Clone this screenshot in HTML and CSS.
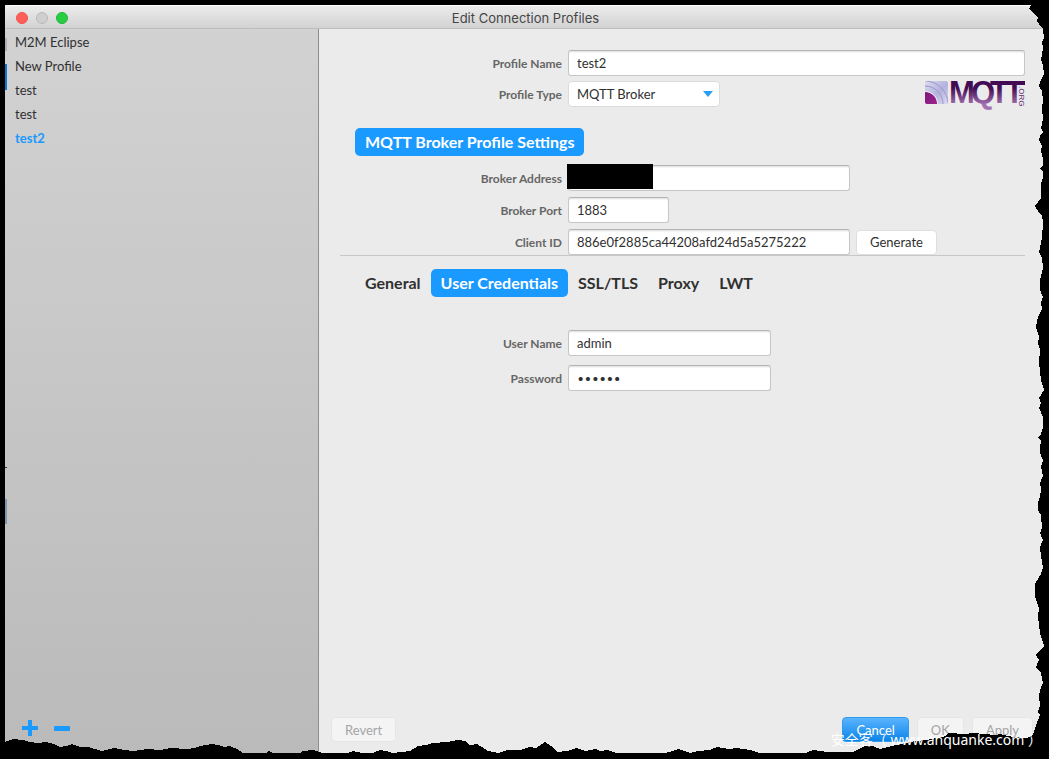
FILE: index.html
```html
<!DOCTYPE html>
<html lang="en">
<head>
  <meta charset="UTF-8" />
  <meta name="viewport" content="width=device-width, initial-scale=1.0"/>
  <title>Edit Connection Profiles</title>
  <link rel="stylesheet" href="styles.css">
</head>
<body>
  <div class="window">
    <header class="titlebar">
      <div class="lights">
        <button type="button" class="light red" aria-label="Close"></button>
        <button type="button" class="light grey" aria-label="Minimize"></button>
        <button type="button" class="light green" aria-label="Zoom"></button>
      </div>
      <h1>Edit Connection Profiles</h1>
    </header>

    <div class="content">
      <aside class="sidebar">
        <ul class="profiles">
          <li><a href="#">M2M Eclipse</a></li>
          <li><a href="#">New Profile</a></li>
          <li><a href="#">test</a></li>
          <li><a href="#">test</a></li>
          <li><a href="#" class="active">test2</a></li>
        </ul>
        <div class="sidebar-actions">
          <button type="button" aria-label="Add profile">
            <svg width="16" height="16" viewBox="0 0 16 16"><path d="M6 0h4v6h6v4h-6v6H6v-6H0V6h6z" fill="#1a99ff"/></svg>
          </button>
          <button type="button" aria-label="Remove profile">
            <svg width="16" height="16" viewBox="0 0 16 16"><rect y="6" width="16" height="5" rx="1" fill="#1a99ff"/></svg>
          </button>
        </div>
      </aside>

      <form class="panel">
        <div class="fields">
          <label for="profile-name">Profile Name</label>
          <input type="text" id="profile-name" value="test2">

          <label for="profile-type">Profile Type</label>
          <div class="type-row">
            <div class="select-wrap">
              <select id="profile-type">
                <option>MQTT Broker</option>
              </select>
              <svg class="arrow" width="10" height="6" viewBox="0 0 10 6"><path d="M0 0h10L5 6z" fill="#2a9df4"/></svg>
            </div>
            <svg class="logo" width="100" height="26" viewBox="0 0 100 26">
              <defs>
                <linearGradient id="word" x1="0" y1="0" x2="0" y2="24" gradientUnits="userSpaceOnUse">
                  <stop offset="0.3" stop-color="#430b54"/>
                  <stop offset="1" stop-color="#a673b2"/>
                </linearGradient>
                <linearGradient id="wave" x1="0" y1="0" x2="1" y2="1">
                  <stop offset="0" stop-color="#dcdcf0"/>
                  <stop offset="0.55" stop-color="#b4b1dc"/>
                  <stop offset="1" stop-color="#dedef0"/>
                </linearGradient>
                <linearGradient id="core" x1="0" y1="0" x2="1" y2="1">
                  <stop offset="0" stop-color="#6b1173"/>
                  <stop offset="1" stop-color="#b02a96"/>
                </linearGradient>
                <clipPath id="tile"><rect width="23" height="23" rx="2"/></clipPath>
              </defs>
              <g clip-path="url(#tile)">
                <rect width="23" height="23" fill="url(#wave)"/>
                <circle cx="0" cy="23" r="23" fill="none" stroke="#9a96cc"/>
                <circle cx="0" cy="23" r="18" fill="none" stroke="#9a96cc"/>
                <circle cx="0" cy="23" r="13" fill="#ebebf5"/>
                <circle cx="0" cy="23" r="12" fill="url(#core)"/>
              </g>
              <g fill="url(#word)">
                <text class="logo-word" x="24 46 65 80" y="22">MQTT</text>
                <rect x="66" width="34" height="4"/>
              </g>
              <text class="logo-org" transform="translate(94 5) rotate(90)">.ORG</text>
            </svg>
          </div>
        </div>

        <h2 class="pill">MQTT Broker Profile Settings</h2>

        <div class="fields">
          <label for="address">Broker Address</label>
          <div class="redacted">
            <input type="text" id="address" class="medium">
            <span class="mask"></span>
          </div>

          <label for="port">Broker Port</label>
          <input type="text" id="port" class="small" value="1883">

          <label for="client-id">Client ID</label>
          <div class="id-row">
            <input type="text" id="client-id" class="medium" value="886e0f2885ca44208afd24d5a5275222">
            <button type="button" class="btn">Generate</button>
          </div>
        </div>

        <hr>

        <nav class="tabs">
          <button type="button">General</button>
          <button type="button" class="active">User Credentials</button>
          <button type="button">SSL/TLS</button>
          <button type="button">Proxy</button>
          <button type="button">LWT</button>
        </nav>

        <div class="fields credentials">
          <label for="user">User Name</label>
          <input type="text" id="user" value="admin">
          <label for="password">Password</label>
          <input type="password" id="password" value="secret">
        </div>

        <footer class="actions">
          <button type="button" class="btn revert" disabled>Revert</button>
          <button type="button" class="btn primary">Cancel</button>
          <button type="button" class="btn" disabled>OK</button>
          <button type="button" class="btn" disabled>Apply</button>
        </footer>
      </form>
    </div>
  </div>

  <!-- torn paper border -->
  <svg class="torn" viewBox="0 0 1049 759" preserveAspectRatio="none" aria-hidden="true">
    <rect x="5" y="64" width="2" height="26" fill="#0a78d0"/>
    <rect x="5" y="38" width="2" height="13" fill="#b0b0b0"/>
    <rect x="5" y="467" width="2" height="1" fill="#333"/>
    <rect x="5" y="499" width="2" height="25" fill="#8096ad"/>
    <path d="M1049 0H1031V5L1029 9L1034 14L1038 18L1037 21L1041 27L1043 29L1044 38L1042 42L1043 48L1041 60L1043 65L1044 74L1041 80L1039 86L1042 91L1043 101L1042 108L1043 119L1041 128L1043 132L1040 136L1039 140L1042 146L1041 151L1043 159L1043 165L1040 168L1043 172L1043 178L1041 184L1041 198L1035 206L1038 211L1042 216L1043 222L1042 238L1039 252L1042 258L1043 268L1040 280L1040 290L1043 297L1041 303L1042 309L1038 317L1036 327L1039 337L1038 343L1040 350L1039 363L1041 380L1044 390L1039 398L1041 403L1039 408L1043 417L1043 428L1041 434L1038 437L1041 441L1040 447L1040 453L1043 460L1041 467L1043 476L1040 483L1041 489L1040 497L1038 502L1038 510L1041 515L1042 528L1040 533L1043 540L1040 547L1041 556L1043 568L1041 574L1035 584L1035 597L1039 608L1038 617L1040 633L1044 646L1036 655L1039 660L1036 667L1041 673L1043 683L1040 690L1039 697L1040 705L1038 712L1040 715L1036 725L1033 735L1027 738L1013 737L1000 734L996 735L973 733L965 734L948 733L946 736L927 740L915 741L900 744L892 746L880 749L873 746L865 746L857 750L853 752L827 752L820 751L813 750L806 753L760 753L750 750L737 748L729 749L717 747L710 750L698 751L690 753L678 749L670 752L663 753L617 753L607 750L600 751L596 749L585 751L577 748L567 751L557 752L551 746L545 742L536 748L530 747L520 750L507 750L498 753L488 751L482 747L477 744L470 745L465 741L458 740L447 742L433 743L426 745L418 746L410 751L402 752L392 753L386 751L380 750L373 753L362 753L353 751L347 753L322 753L317 751L312 750L303 751L300 753L273 753L269 751L266 753L243 753L237 749L230 746L224 747L218 745L212 744L200 746L194 748L187 749L170 748L160 750L147 749L133 751L125 750L114 748L102 751L95 749L88 747L80 747L72 744L66 746L60 747L54 744L46 742L37 743L30 742L23 740L13 739L5 742V0H0V759H1049Z"/>
  </svg>
  <p class="watermark">安全客（ www.anquanke.com ）</p>
</body>
</html>
```
FILE: styles.css
```css
* {
  box-sizing: border-box;
}

body {
  margin: 0;
  padding: 5px 0 0 5px;
  min-height: 100vh;
  display: flex;
  position: relative;
  background: #000;
  color: #303030;
  font-family: Lato, "Noto Sans CJK SC", sans-serif;
  font-size: 13px;
}

.window {
  flex: 1;
  display: flex;
  flex-direction: column;
  background: #ebebeb;
}

.titlebar {
  height: 24px;
  display: flex;
  align-items: center;
  padding: 2px 0 0 11px;
  border-top: 1px solid #fff;
  border-bottom: 1px solid #bdbdbd;
  border-top-left-radius: 6px;
  background: linear-gradient(#ececec, #d2d2d2);
}

.titlebar h1 {
  flex: 1;
  margin: 0 66px 0 0;
  color: #454545;
  font-family: Inter, sans-serif;
  font-size: 13px;
  font-weight: normal;
  line-height: 20px;
  text-align: center;
}

.lights {
  display: flex;
  gap: 8px;
}

.light {
  width: 12px;
  height: 12px;
  padding: 0;
  border: 1px solid #b9b9b9;
  border-radius: 50%;
  background: #cfcfcf;
}

.light.red {
  border-color: #f0544d;
  background: #ff5f57;
}

.light.green {
  border-color: #20b838;
  background: #28cd41;
}

.content {
  flex: 1;
  display: flex;
}

.sidebar {
  width: 314px;
  display: flex;
  flex-direction: column;
  justify-content: space-between;
  padding: 1px 10px 23px;
  border-right: 1px solid #8e8e8e;
  background: linear-gradient(#d2d2d2, #bababa);
}

.profiles {
  margin: 0;
  padding: 0;
  list-style: none;
}

.profiles a {
  display: block;
  color: #303030;
  font-size: 13px;
  line-height: 24px;
  text-decoration: none;
}

.profiles a.active {
  color: #1a99ff;
  font-weight: bold;
}

.sidebar-actions {
  display: flex;
  gap: 16px;
  padding: 0 7px;
}

.sidebar-actions button {
  height: 16px;
  padding: 0;
  border: 0;
  background: none;
}

.sidebar-actions svg {
  display: block;
}

.panel {
  flex: 1;
  display: flex;
  flex-direction: column;
  padding: 21px 24px 17px 12px;
}

.fields {
  display: grid;
  grid-template-columns: 231px 1fr;
  gap: 6px;
  align-items: center;
}

.fields label {
  color: #666;
  font-size: 12px;
  font-weight: bold;
  text-align: right;
}

input, select {
  width: 100%;
  height: 26px;
  padding: 0 8px;
  border: 1px solid #c6c6c6;
  border-top-color: #b4b4b4;
  border-radius: 3px;
  background: #fff;
  box-shadow: inset 0 2px 2px -1px #ddd;
  color: #303030;
  font-family: inherit;
  font-size: 13px;
}

input[type="password"] {
  font-family: Inter, sans-serif;
}

input.medium {
  width: 282px;
}

input.small {
  width: 101px;
}

.type-row, .id-row {
  display: flex;
  align-items: center;
}

.type-row {
  justify-content: space-between;
}

.id-row {
  gap: 6px;
}

.select-wrap {
  position: relative;
  width: 152px;
}

select {
  display: block;
  height: 26px;
  appearance: none;
  border-color: #dcdcdc;
  border-radius: 4px;
  box-shadow: none;
}

.arrow {
  position: absolute;
  top: 10px;
  right: 7px;
  pointer-events: none;
}

.logo {
  display: block;
  overflow: visible;
}

.logo-word {
  font-family: "Liberation Sans", Arial, sans-serif;
  font-size: 31px;
  font-weight: bold;
}

.logo-org {
  fill: #5c2a6c;
  font-family: "Liberation Sans", Arial, sans-serif;
  font-size: 8px;
}

.redacted {
  position: relative;
}

.redacted input {
  display: block;
}

.mask {
  position: absolute;
  top: -1px;
  left: -1px;
  width: 86px;
  height: 25px;
  background: #000;
}

.pill, .tabs button {
  height: 28px;
  padding: 0 10px;
  border: 0;
  border-radius: 5px;
  background: none;
  color: #303030;
  font-family: inherit;
  font-size: 16px;
  font-weight: bold;
  line-height: 28px;
}

.pill {
  align-self: flex-start;
  margin: 20px 0 9px 24px;
}

.pill, .tabs button.active {
  background: #1a99ff;
  color: #fff;
}

hr {
  width: calc(100% - 9px);
  margin: 0 0 13px 9px;
  border: 0;
  border-top: 1px solid #c8c8c8;
}

.tabs {
  display: flex;
  padding-left: 24px;
}

.credentials {
  row-gap: 9px;
  margin-top: 33px;
}

.credentials input {
  width: 203px;
}

.fields:first-child {
  row-gap: 5px;
}

.fields:first-child + .pill {
  margin-top: 21px;
}

.btn {
  height: 25px;
  padding: 0 13px;
  border: 1px solid #dedede;
  border-radius: 4px;
  background: #fff;
  color: #303030;
  font-family: inherit;
  font-size: 13px;
}

.btn:disabled {
  border-color: #e6e6e6;
  background: #f4f4f4;
  color: #a5a5a5;
}

.btn.primary {
  border-color: #2e9bf0;
  background: linear-gradient(#5ab4ff, #0d84e8);
  color: #fff;
}

.actions {
  display: flex;
  gap: 8px;
  margin: auto -8px 0 0;
}

.revert {
  margin-right: auto;
}

.torn {
  position: absolute;
  top: 0;
  left: 0;
  width: 100%;
  height: 100%;
  pointer-events: none;
  shape-rendering: crispEdges;
}

.watermark {
  position: absolute;
  right: 7px;
  bottom: 9px;
  margin: 0;
  color: #fff;
  font-family: "Noto Sans", "Noto Sans CJK SC", sans-serif;
  font-size: 14px;
  line-height: 20px;
}
```
